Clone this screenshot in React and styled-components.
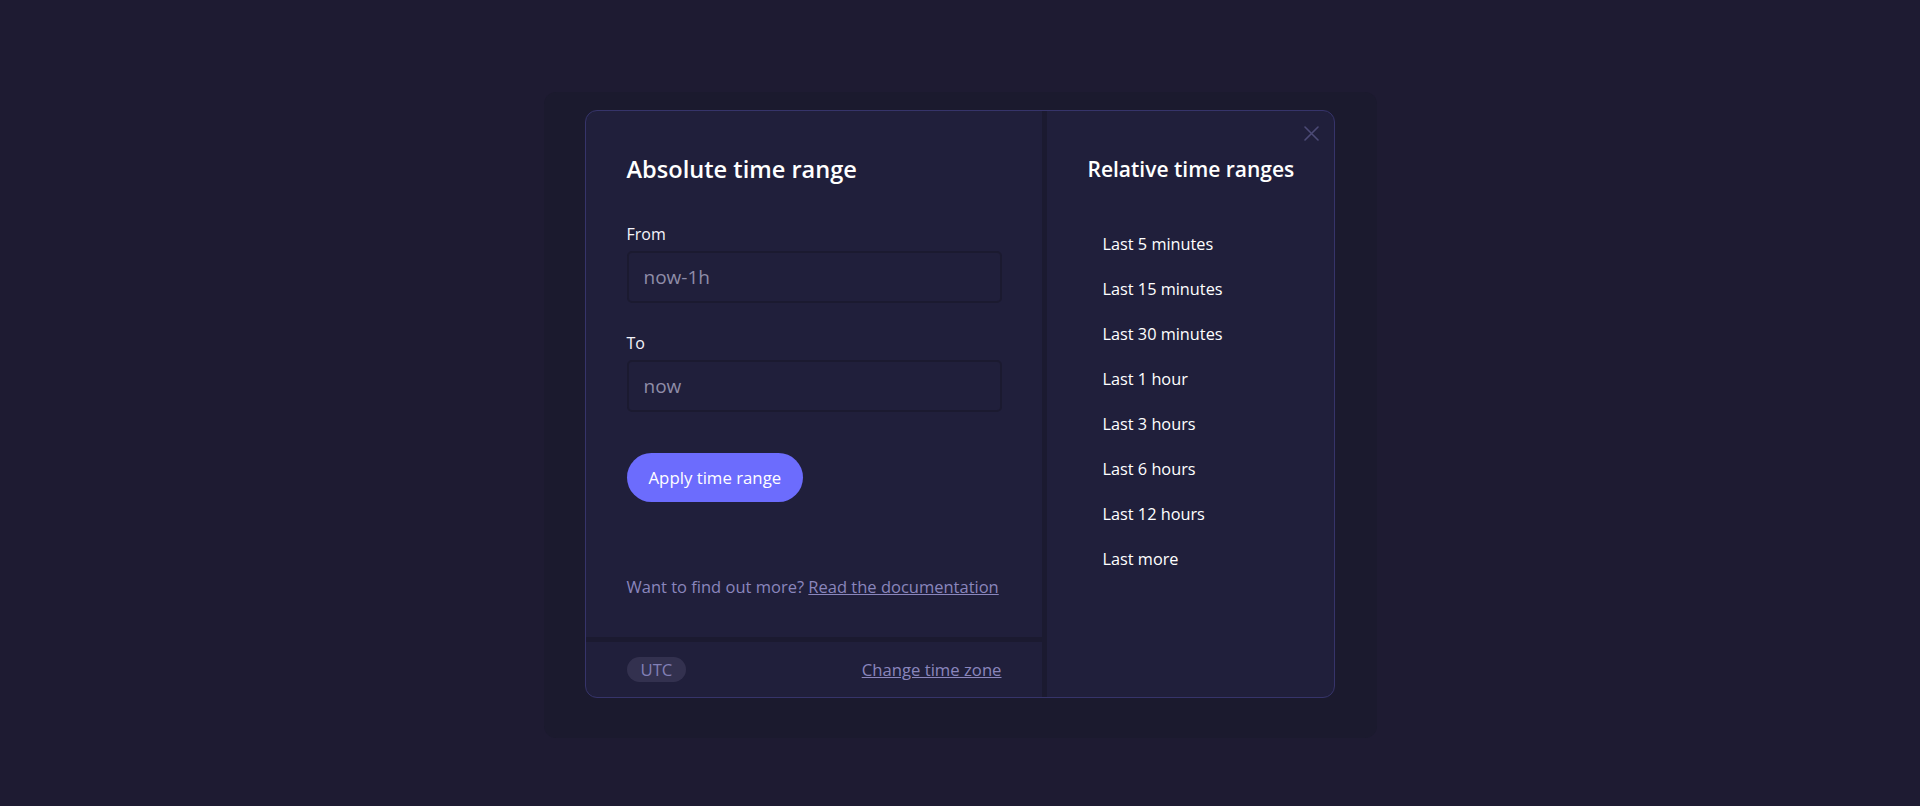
import styled, { createGlobalStyle } from "styled-components";

const GlobalStyle = createGlobalStyle`
  html, body {
    margin: 0;
    padding: 0;
    height: 806px;
    overflow: hidden;
    background: #1e1b32;
    font-family: "Open Sans", "Noto Sans", sans-serif;
  }
  * { box-sizing: border-box; }
`;

const Page = styled.div`
  height: 806px;
  overflow: hidden;
  display: flex;
  justify-content: center;
  align-items: flex-start;
  padding-top: 92px;
`;

const Backdrop = styled.div`
  background: #1b1a2e;
  border-radius: 12px;
  padding: 18px 42px 40px 41px;
`;

const Modal = styled.div`
  position: relative;
  width: 750px;
  height: 588px;
  background: #201f3b;
  border: 1px solid #36346a;
  border-radius: 12px;
  overflow: hidden;
  display: grid;
  grid-template-columns: 456px 5px 1fr;
`;

const LeftCol = styled.div`
  display: flex;
  flex-direction: column;
`;

const Main = styled.div`
  flex: 1;
  display: flex;
  flex-direction: column;
  padding: 43px 40px 40px 41px;
`;

const Title = styled.h2`
  margin: 0;
  font-size: ${(p) => (p.small ? "21px" : "23.6px")};
  line-height: ${(p) => (p.small ? "26px" : "30px")};
  font-weight: 600;
  color: #ffffff;
`;

const Label = styled.label`
  display: block;
  margin-top: ${(p) => p.gap}px;
  font-size: 16px;
  line-height: 20px;
  color: #f4f4fa;
`;

const Input = styled.input`
  display: block;
  width: 100%;
  height: 52px;
  margin-top: 7px;
  padding: 0 15px;
  background: #201f3b;
  border: 2px solid #1b1a30;
  border-radius: 5px;
  color: #8f8da8;
  font-family: inherit;
  font-size: 19px;
  outline: none;
`;

const ApplyButton = styled.button`
  align-self: flex-start;
  margin-top: 41px;
  height: 49px;
  padding: 0 22px;
  border: 0;
  border-radius: 25px;
  background: #6c6cfd;
  color: #ffffff;
  font-family: inherit;
  font-size: 16.8px;
`;

const Help = styled.p`
  margin: auto 0 0;
  font-size: 16.5px;
  line-height: 20px;
  white-space: nowrap;
  color: #8a86bd;
`;

const Link = styled.a`
  color: #8a86bd;
  text-decoration: underline;
  cursor: pointer;
`;

const Footer = styled.div`
  height: 60px;
  border-top: 5px solid #1b1a30;
  display: flex;
  align-items: center;
  justify-content: space-between;
  padding: 0 40px 0 41px;
  font-size: 16.7px;
`;

const Pill = styled.span`
  height: 25px;
  line-height: 25px;
  padding: 0 14px;
  border-radius: 13px;
  background: #33314f;
  color: #8280b6;
`;

const Divider = styled.div`
  background: #1b1a30;
`;

const RightCol = styled.div`
  padding: 45px 20px 0 41px;
`;

const RangeList = styled.ul`
  list-style: none;
  margin: 40px 0 0;
  padding: 0;
`;

const RangeItem = styled.li`
  height: 45px;
  line-height: 45px;
  padding-left: 15px;
  font-size: 16.3px;
  color: #ffffff;
  cursor: pointer;
`;

const CloseButton = styled.button`
  position: absolute;
  top: 13px;
  right: 13px;
  width: 19px;
  height: 19px;
  padding: 0;
  border: 0;
  background: none;
  display: flex;
  align-items: center;
  justify-content: center;
`;

const ranges = [
  "Last 5 minutes",
  "Last 15 minutes",
  "Last 30 minutes",
  "Last 1 hour",
  "Last 3 hours",
  "Last 6 hours",
  "Last 12 hours",
  "Last more",
];

export default function App() {
  return (
    <>
      <GlobalStyle />
      <Page>
        <Backdrop>
          <Modal>
            <LeftCol>
              <Main>
                <Title>Absolute time range</Title>
                <Label gap={40}>From</Label>
                <Input defaultValue="now-1h" />
                <Label gap={30}>To</Label>
                <Input defaultValue="now" />
                <ApplyButton>Apply time range</ApplyButton>
                <Help>
                  Want to find out more? <Link>Read the documentation</Link>
                </Help>
              </Main>
              <Footer>
                <Pill>UTC</Pill>
                <Link>Change time zone</Link>
              </Footer>
            </LeftCol>
            <Divider />
            <RightCol>
              <Title small>Relative time ranges</Title>
              <RangeList>
                {ranges.map((r) => (
                  <RangeItem key={r}>{r}</RangeItem>
                ))}
              </RangeList>
            </RightCol>
            <CloseButton aria-label="Close">
              <svg width="15" height="15" viewBox="0 0 15 15">
                <path d="M1 1L14 14M14 1L1 14" stroke="#4c4a76" strokeWidth="1.6" strokeLinecap="round" />
              </svg>
            </CloseButton>
          </Modal>
        </Backdrop>
      </Page>
    </>
  );
}
